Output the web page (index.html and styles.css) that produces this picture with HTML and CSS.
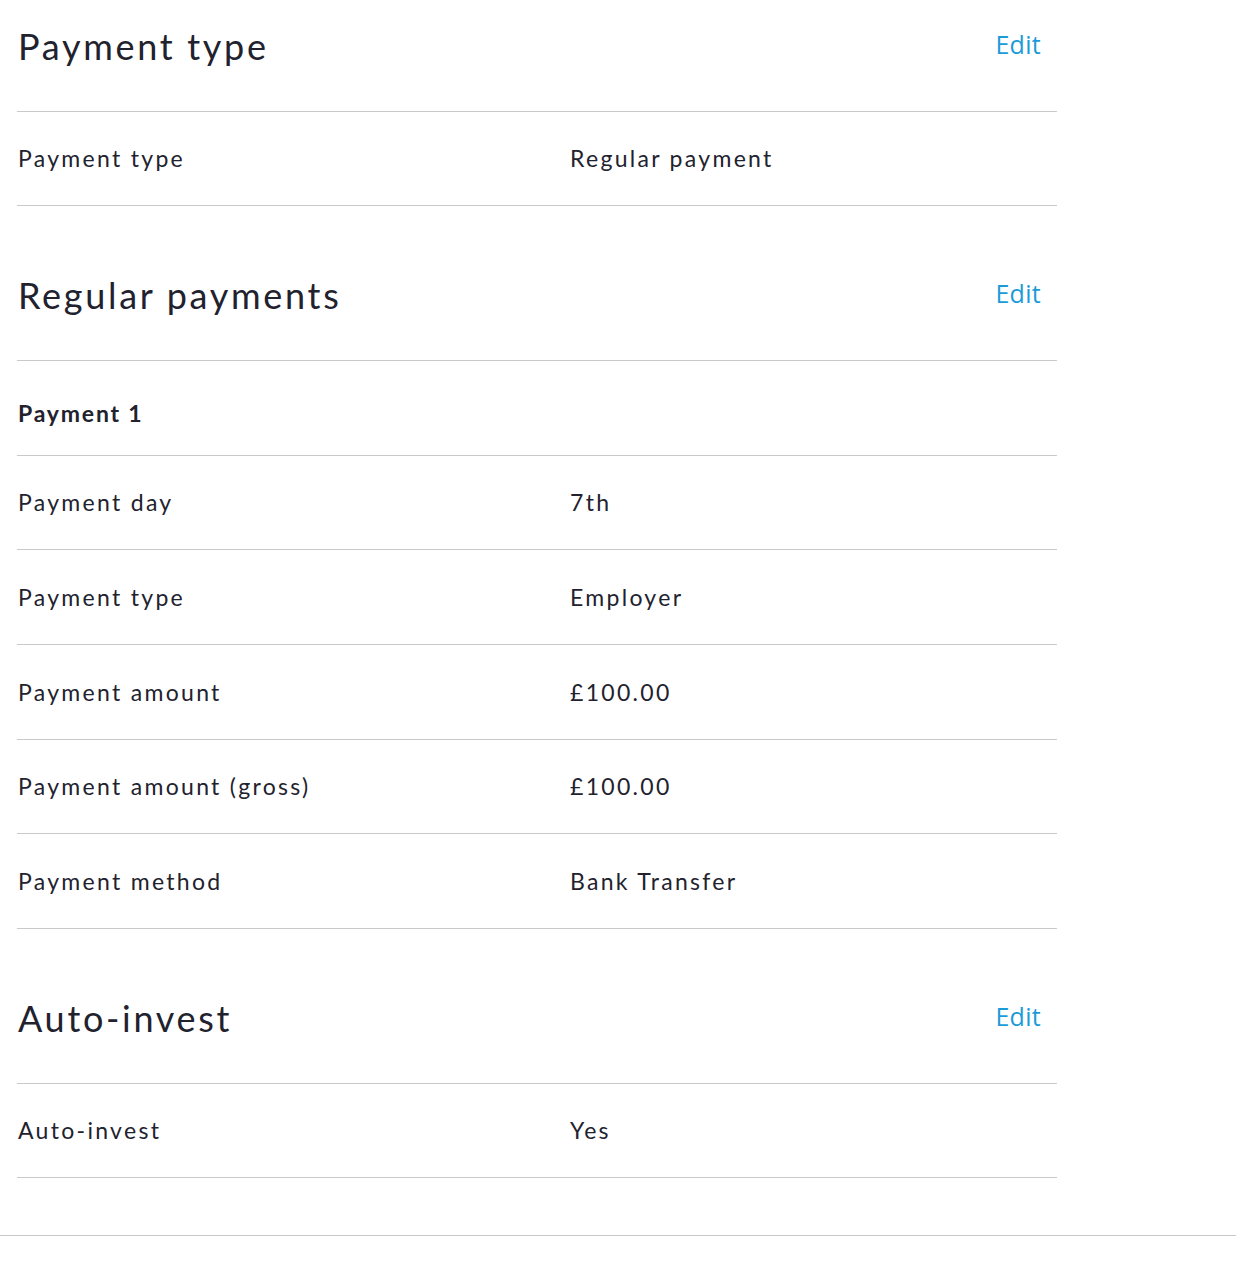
FILE: index.html
```html
<!DOCTYPE html>
<html lang="en">
<head>
<meta charset="utf-8">
<title>Review</title>
<link rel="stylesheet" href="styles.css">
</head>
<body>
<main class="summary">
  <section class="section">
    <div class="section-head">
      <h2 class="section-title">Payment type</h2>
      <a class="edit" href="#">Edit</a>
    </div>
    <div class="row"><span class="label">Payment type</span><span class="value">Regular payment</span></div>
  </section>

  <section class="section">
    <div class="section-head">
      <h2 class="section-title">Regular payments</h2>
      <a class="edit" href="#">Edit</a>
    </div>
    <div class="row row-sub"><span class="label strong">Payment 1</span></div>
    <div class="row"><span class="label">Payment day</span><span class="value">7th</span></div>
    <div class="row"><span class="label">Payment type</span><span class="value">Employer</span></div>
    <div class="row"><span class="label">Payment amount</span><span class="value">£100.00</span></div>
    <div class="row"><span class="label">Payment amount (gross)</span><span class="value">£100.00</span></div>
    <div class="row"><span class="label">Payment method</span><span class="value">Bank Transfer</span></div>
  </section>

  <section class="section">
    <div class="section-head">
      <h2 class="section-title">Auto-invest</h2>
      <a class="edit" href="#">Edit</a>
    </div>
    <div class="row"><span class="label">Auto-invest</span><span class="value">Yes</span></div>
  </section>
</main>
<div class="page-rule"></div>
</body>
</html>
```
FILE: styles.css
```css
html, body {
  margin: 0;
  padding: 0;
  background: #ffffff;
}
body {
  font-family: "Lato", "Liberation Sans", sans-serif;
  color: #22222e;
}
.summary {
  width: 1040px;
  margin-left: 17px;
  padding-bottom: 56.5px;
}
.section + .section {
  margin-top: 43px;
}
.section-head {
  display: flex;
  justify-content: space-between;
  align-items: flex-start;
  height: 110.6px;
  border-bottom: 1px solid #c9c9c9;
  padding: 0 16px 0 1px;
  box-sizing: content-box;
}
.section-title {
  margin: 0;
  font-weight: 400;
  font-size: 36px;
  line-height: 40px;
  padding-top: 26px;
  letter-spacing: 2.7px;
}
.edit {
  font-family: "Open Sans", "Liberation Sans", sans-serif;
  color: #1a9bd7;
  text-decoration: none;
  font-size: 25px;
  line-height: 30px;
  padding-top: 29px;
  letter-spacing: 0.3px;
}
.row {
  display: grid;
  grid-template-columns: 552px 1fr;
  align-items: center;
  height: 93.7px;
  border-bottom: 1px solid #c9c9c9;
  padding-left: 1px;
  font-size: 23px;
  letter-spacing: 2.3px;
}
.row-sub {
  height: 82.7px;
  padding-top: 11px;
}
.strong {
  font-weight: 700;
  letter-spacing: 1.8px;
}
.page-rule {
  border-top: 1px solid #c9c9c9;
  width: 100%;
}
```
